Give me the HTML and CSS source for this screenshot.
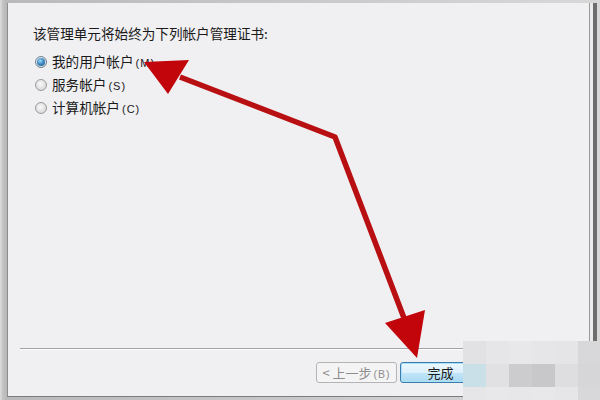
FILE: index.html
```html
<!DOCTYPE html>
<html lang="zh-CN">
<head>
<meta charset="utf-8">
<title>证书管理单元</title>
<link rel="stylesheet" href="styles.css">
</head>
<body>
<div class="screen">
  <div class="dialog">
    <div class="content">
      <p class="heading">该管理单元将始终为下列帐户管理证书:</p>
      <div class="options">
        <label class="option"><span class="radio checked"><span class="dot"></span></span><span class="label">我的用户帐户<span class="key">(M)</span></span></label>
        <label class="option"><span class="radio"></span><span class="label">服务帐户<span class="key">(S)</span></span></label>
        <label class="option"><span class="radio"></span><span class="label">计算机帐户<span class="key">(C)</span></span></label>
      </div>
    </div>
    <div class="footer">
      <div class="separator"></div>
      <div class="buttons">
        <button class="btn disabled">&lt; 上一步<span class="key">(B)</span></button>
        <button class="btn primary">完成</button>
      </div>
    </div>
  </div>

  <svg class="arrows" width="600" height="400" viewBox="0 0 600 400">
    <polyline points="180,77 335,137 404,318" fill="none" stroke="#b80f12" stroke-width="5.5" stroke-linejoin="round"/>
    <polygon points="144,62 189,60 168,94" fill="#c2050b"/>
    <polygon points="417,358 385,323 425,310" fill="#c2050b"/>
  </svg>

  <div class="mosaic">
    <span style="background:#e2e2e5"></span><span style="background:#e6e5e8"></span><span style="background:#e8e7ea"></span><span style="background:#e6e5e8"></span><span style="background:#e5e4e7"></span><span style="background:#d8d7da"></span>
    <span style="background:#c9e0e9"></span><span style="background:#e1e0e3"></span><span style="background:#cccbce"></span><span style="background:#c8c7ca"></span><span style="background:#dedde0"></span><span style="background:#d6d5d8"></span>
    <span style="background:#e6e5e8"></span><span style="background:#e8e7ea"></span><span style="background:#e7e6e9"></span><span style="background:#e8e7ea"></span><span style="background:#e6e5e8"></span><span style="background:#d8d8db"></span>
  </div>
</div>
</body>
</html>
```

FILE: styles.css
```css
* { box-sizing: border-box; }

html, body {
  margin: 0;
  padding: 0;
}

body {
  font-family: "Noto Sans CJK SC", "Noto Sans", sans-serif;
  color: #1a1a1a;
}

.screen {
  position: relative;
  width: 600px;
  height: 400px;
  padding: 3px 10px 3px 7px;
  background: linear-gradient(to right, #dedede 0, #c2c2c2 3px, #b9b9b9 6px, #d8d8d8 100%);
  overflow: hidden;
}

.dialog {
  height: 394px;
  display: flex;
  flex-direction: column;
  background: #f0eff2;
  border-left: 1px solid #8d8d8d;
  border-right: 1px solid #9a9a9a;
  border-bottom: 1px solid #7c7c7c;
  box-shadow: 3px 0 0 #ececec, 7px 0 0 #6e6e6e;
}

.content {
  padding: 21px 0 0 25px;
}

.heading {
  margin: 0 0 8px;
  font-size: 13.6px;
  line-height: 18px;
  color: #1a1a1a;
}

.options {
  display: flex;
  flex-direction: column;
}

.option {
  display: flex;
  align-items: center;
  gap: 5px;
  height: 23px;
  padding-left: 2px;
}

.radio {
  width: 12px;
  height: 12px;
  border-radius: 50%;
  border: 1px solid #9a9b9c;
  background: radial-gradient(circle at 45% 40%, #fafafa 0, #e6e6e6 45%, #cfcfcf 100%);
  display: flex;
  align-items: center;
  justify-content: center;
}

.radio.checked {
  border-color: #6f8597;
}

.dot {
  width: 8px;
  height: 8px;
  border-radius: 50%;
  background: radial-gradient(circle at 40% 35%, #a6dcf8 0, #3f8cc6 45%, #1c4f82 100%);
}

.label {
  font-size: 13.6px;
  line-height: 18px;
  color: #1a1a1a;
}

.key {
  font-family: "Liberation Sans", sans-serif;
  font-size: 11px;
  letter-spacing: 1px;
  margin-left: 2px;
}

.footer {
  margin-top: auto;
}

.separator {
  margin-left: 12px;
  height: 2px;
  border-top: 1px solid #a3a3a5;
  border-bottom: 1px solid #fcfcfd;
}

.buttons {
  display: flex;
  justify-content: flex-end;
  gap: 3px;
  padding: 12px 108px 13px 0;
}

.btn {
  width: 81px;
  height: 21px;
  padding: 0;
  font-family: "Noto Sans CJK SC", sans-serif;
  font-size: 13px;
  line-height: 19px;
  border-radius: 3px;
}

.btn .key {
  font-size: 10.5px;
}

.btn.disabled {
  color: #8d8d8d;
  border: 1px solid #b4b4b6;
  background: #f4f4f4;
}

.btn.primary {
  color: #1a1a1a;
  border: 1px solid #3d7bad;
  background: linear-gradient(#edf7fd 0, #dcf0fc 50%, #c3e6f9 51%, #abd9f2 100%);
  box-shadow: inset 0 0 0 1px #a8e2f8;
}

.arrows {
  position: absolute;
  left: 0;
  top: 0;
  pointer-events: none;
}

.mosaic {
  position: absolute;
  left: 463px;
  top: 341px;
  width: 137px;
  height: 59px;
  display: grid;
  grid-template-columns: 23px 23px 23px 23px 23px 22px;
  grid-template-rows: 23px 23px 13px;
}
```
